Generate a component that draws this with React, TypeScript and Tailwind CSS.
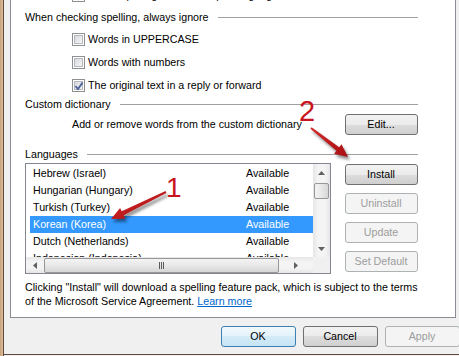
import React from "react";

const languages = [
  { name: "Hebrew (Israel)", status: "Available" },
  { name: "Hungarian (Hungary)", status: "Available" },
  { name: "Turkish (Turkey)", status: "Available" },
  { name: "Korean (Korea)", status: "Available", selected: true },
  { name: "Dutch (Netherlands)", status: "Available" },
  { name: "Indonesian (Indonesia)", status: "Available" },
];

function CheckBox({ checked }: { checked?: boolean }) {
  return (
    <span className="relative flex h-[13px] w-[13px] shrink-0 items-center justify-center border border-[#8e8f8f] bg-white">
      <span className="h-[9px] w-[9px] border border-[#b5b9bf] bg-[linear-gradient(135deg,#d5d8dc,#f6f7f8)]" />
      {checked ? (
        <svg className="absolute left-[1px] top-[1px]" width="10" height="10" viewBox="0 0 10 10">
          <path d="M1.5 5.2 L4 8 L8.6 1.4" fill="none" stroke="#4b619a" strokeWidth="1.8" />
        </svg>
      ) : null}
    </span>
  );
}

function CheckRow({ label, checked }: { label: string; checked?: boolean }) {
  return (
    <div className="flex h-[23px] shrink-0 items-center gap-[3px] pl-[47px]">
      <CheckBox checked={checked} />
      <span>{label}</span>
    </div>
  );
}

function Heading({ label, className = "" }: { label: string; className?: string }) {
  return (
    <div className={`flex shrink-0 items-center gap-[9px] ${className}`}>
      <span>{label}</span>
      <span className="h-px flex-1 bg-[#a0a0a0]" />
    </div>
  );
}

function Button({
  children,
  disabled,
  primary,
  className = "",
}: {
  children: React.ReactNode;
  disabled?: boolean;
  primary?: boolean;
  className?: string;
}) {
  const look = disabled
    ? "border-[#adb2b5] bg-[#f4f4f4] text-[#9c9c9c]"
    : primary
      ? "border-[#3c7fb1] bg-[linear-gradient(#f1f9fd,#e3f2fb_50%,#d4ebf8_50%,#c6e4f6)] text-black"
      : "border-[#707070] bg-[linear-gradient(#f2f2f2,#ebebeb_50%,#dddddd_50%,#cfcfcf)] text-black";
  return (
    <div className={`flex shrink-0 items-center justify-center rounded-[3px] border ${look} ${className}`}>
      {children}
    </div>
  );
}

function ScrollArrow({ dir }: { dir: "up" | "down" | "left" | "right" }) {
  const d = {
    up: "M0 4 L3.5 0 L7 4 Z",
    down: "M0 0 L7 0 L3.5 4 Z",
    left: "M4 0 L4 7 L0 3.5 Z",
    right: "M0 0 L4 3.5 L0 7 Z",
  }[dir];
  const vertical = dir === "up" || dir === "down";
  return (
    <svg width={vertical ? 7 : 4} height={vertical ? 4 : 7} viewBox={vertical ? "0 0 7 4" : "0 0 4 7"}>
      <path d={d} fill="#606060" />
    </svg>
  );
}

function LanguageList() {
  return (
    <div className="flex h-[111px] w-[306px] flex-col border border-[#828790] bg-white">
      <div className="flex min-h-0 flex-1">
        <div className="flex-1 overflow-hidden pl-[4px] pt-[1px]">
          {languages.map((l) => (
            <div
              key={l.name}
              className={`flex h-[17px] items-center pl-[3px] ${l.selected ? "bg-[#3399ff] text-white" : ""}`}
            >
              <span className="w-[213px] shrink-0 whitespace-nowrap">{l.name}</span>
              <span>{l.status}</span>
            </div>
          ))}
        </div>
        <div className="flex w-[17px] flex-col bg-[linear-gradient(90deg,#e6e6e6,#f4f4f4_30%,#f4f4f4_70%,#e6e6e6)]">
          <div className="flex h-[17px] items-center justify-center">
            <ScrollArrow dir="up" />
          </div>
          <div className="mx-[1px] mt-[2px] h-[16px] rounded-[2px] border border-[#979797] bg-[linear-gradient(90deg,#f3f3f3,#e8e8e8_50%,#d6d6d6)]" />
          <div className="flex-1" />
          <div className="flex h-[17px] items-center justify-center">
            <ScrollArrow dir="down" />
          </div>
        </div>
      </div>
      <div className="flex h-[16px]">
        <div className="flex flex-1 items-center bg-[linear-gradient(#e6e6e6,#f4f4f4_30%,#f4f4f4_70%,#e6e6e6)]">
          <div className="flex w-[18px] items-center justify-center">
            <ScrollArrow dir="left" />
          </div>
          <div className="flex h-[15px] w-[235px] items-center justify-center rounded-[2px] border border-[#979797] bg-[linear-gradient(#f3f3f3,#e8e8e8_50%,#d6d6d6)]">
            <span className="flex gap-[1px]">
              <span className="h-[7px] w-px bg-[#5a5a5a]" />
              <span className="h-[7px] w-px bg-[#5a5a5a]" />
              <span className="h-[7px] w-px bg-[#5a5a5a]" />
            </span>
          </div>
          <div className="flex flex-1 items-center justify-center">
            <ScrollArrow dir="right" />
          </div>
        </div>
        <div className="w-[17px] bg-[#f0f0f0]" />
      </div>
    </div>
  );
}

function Arrows() {
  return (
    <>
      <svg className="pointer-events-none absolute left-0 top-0" width="459" height="356">
        <defs>
          <filter id="blur" x="-20%" y="-20%" width="140%" height="140%">
            <feGaussianBlur stdDeviation="1.6" />
          </filter>
          <linearGradient id="red" x1="0" y1="0" x2="1" y2="1">
            <stop offset="0" stopColor="#d42a2a" />
            <stop offset="1" stopColor="#a80f12" />
          </linearGradient>
        </defs>
        <g filter="url(#blur)" opacity="0.45" transform="translate(2 3)">
          <polygon points="165.6,191.1 166.4,192.9 123.7,215.3 125.3,218.7 111,219 120.1,207.9 121.7,211.3" fill="#000" />
          <polygon points="311.6,127.2 310.4,128.8 336.4,150.7 334.1,153.7 348,157 341.5,144.3 339.2,147.3" fill="#000" />
        </g>
        <polygon points="165.6,191.1 166.4,192.9 123.7,215.3 125.3,218.7 111,219 120.1,207.9 121.7,211.3" fill="url(#red)" />
        <polygon points="311.6,127.2 310.4,128.8 336.4,150.7 334.1,153.7 348,157 341.5,144.3 339.2,147.3" fill="url(#red)" />
      </svg>
      <span className="pointer-events-none absolute left-[166px] top-[174px] font-['Liberation_Sans',sans-serif] text-[28px] leading-[28px] text-[#c8141c]">
        1
      </span>
      <span className="pointer-events-none absolute left-[299px] top-[97px] font-['Liberation_Sans',sans-serif] text-[29px] leading-[29px] text-[#c8141c]">
        2
      </span>
    </>
  );
}

export default function App() {
  return (
    <div className="relative flex h-[356px] w-[459px] overflow-hidden bg-[#f0f0f0] font-['Liberation_Sans',sans-serif] text-[10.7px] text-black">
      <div className="flex w-[4px] shrink-0">
        <div className="w-[3px] bg-[linear-gradient(90deg,#c9a27c,#dcbd9c)]" />
        <div className="w-px bg-[#5d4a3c]" />
      </div>

      <div className="flex flex-1 flex-col">
        <div className="ml-[6px] mr-[6px] flex h-[318px] shrink-0 flex-col border-x border-b border-[#898c95] bg-white pl-[14px] pr-[37px]">
          <div className="-mt-[16px] shrink-0">
            <CheckRow label="Check spelling in current input language" checked />
          </div>
          <Heading label="When checking spelling, always ignore" className="h-[21px]" />
          <CheckRow label="Words in UPPERCASE" />
          <CheckRow label="Words with numbers" />
          <CheckRow label="The original text in a reply or forward" checked />
          <Heading label="Custom dictionary" className="h-[14px]" />
          <div className="mt-[3px] flex h-[20px] shrink-0 items-center justify-between pl-[47px]">
            <span>Add or remove words from the custom dictionary</span>
            <Button className="h-[21px] w-[73px]">Edit...</Button>
          </div>
          <Heading label="Languages" className="mt-[13px] h-[14px]" />
          <div className="mt-[2px] flex shrink-0 justify-between">
            <LanguageList />
            <div className="mt-[1px] flex flex-col gap-[8px]">
              <Button className="h-[21px] w-[73px]">Install</Button>
              <Button className="h-[21px] w-[73px]" disabled>
                Uninstall
              </Button>
              <Button className="h-[21px] w-[73px]" disabled>
                Update
              </Button>
              <Button className="h-[21px] w-[73px]" disabled>
                Set Default
              </Button>
            </div>
          </div>
          <p className="mt-[6px] shrink-0 whitespace-nowrap leading-[14px]">
            Clicking "Install" will download a spelling feature pack, which is subject to the terms
            <br />
            of the Microsoft Service Agreement.{" "}
            <span className="text-[#0066cc] underline">Learn more</span>
          </p>
        </div>

        <div className="mr-[2px] mt-[8px] flex justify-end gap-[7px]">
          <Button primary className="h-[21px] w-[75px]">
            OK
          </Button>
          <Button className="h-[21px] w-[75px]">Cancel</Button>
          <Button disabled className="h-[21px] w-[75px]">
            Apply
          </Button>
        </div>
        <div className="flex-1" />
        <div className="mb-px h-px bg-[#5d4a3c]" />
      </div>

      <div className="flex w-[2px] shrink-0">
        <div className="w-px bg-[#5d4a3c]" />
        <div className="w-px bg-[#dcbd9c]" />
      </div>

      <Arrows />
    </div>
  );
}
